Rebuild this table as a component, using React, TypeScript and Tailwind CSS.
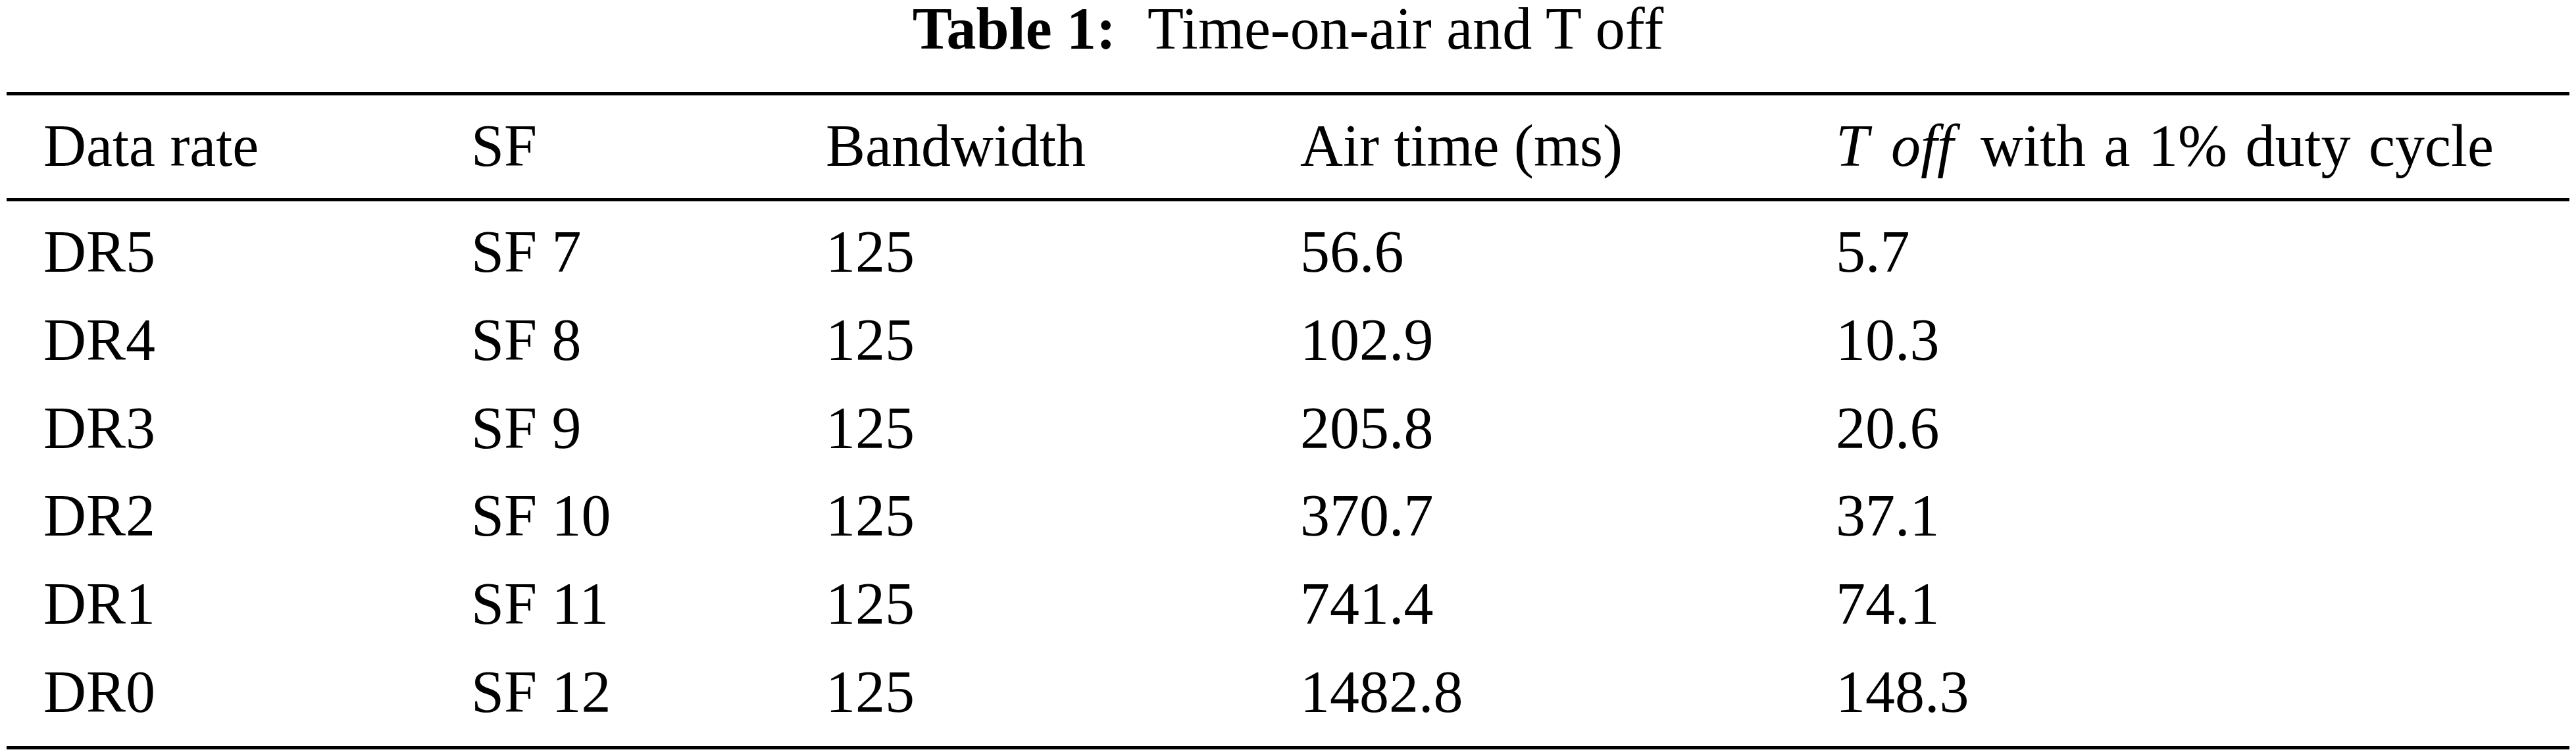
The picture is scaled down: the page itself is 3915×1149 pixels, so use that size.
const rows = [
  ['DR5', 'SF 7', '125', '56.6', '5.7'],
  ['DR4', 'SF 8', '125', '102.9', '10.3'],
  ['DR3', 'SF 9', '125', '205.8', '20.6'],
  ['DR2', 'SF 10', '125', '370.7', '37.1'],
  ['DR1', 'SF 11', '125', '741.4', '74.1'],
  ['DR0', 'SF 12', '125', '1482.8', '148.3'],
];

const cols = 'grid grid-cols-[650px_539px_721px_814px_1fr] pl-[56px]';

export default function App() {
  return (
    <div className="w-[3915px] h-[1149px] bg-white text-black text-[90px] font-['Liberation_Serif','Times_New_Roman',serif] px-[10px]">
      {/* Caption */}
      <div className="h-[140px] leading-[88px] text-center">
        <span className="font-bold mr-[48px]">Table 1:</span>
        <span>Time-on-air and T off</span>
      </div>

      {/* Header */}
      <div className="border-t-[5px] border-b-[5px] border-black">
        <div className={`${cols} pt-[32px] pb-[34px] leading-[90px]`}>
          <div>Data rate</div>
          <div>SF</div>
          <div>Bandwidth</div>
          <div>Air time (ms)</div>
          <div className="whitespace-nowrap">
            <i>T</i>
            <i className="ml-[34px]">off</i>
            <span className="ml-[41px] [word-spacing:5px]">with a 1% duty cycle</span>
          </div>
        </div>
      </div>

      {/* Body */}
      <div className="pt-[10px] pb-[15.5px] border-b-[5px] border-black">
        {rows.map((r) => (
          <div key={r[0]} className={`${cols} leading-[133.75px]`}>
            {r.map((c, i) => (
              <div key={i}>{c}</div>
            ))}
          </div>
        ))}
      </div>
    </div>
  );
}
